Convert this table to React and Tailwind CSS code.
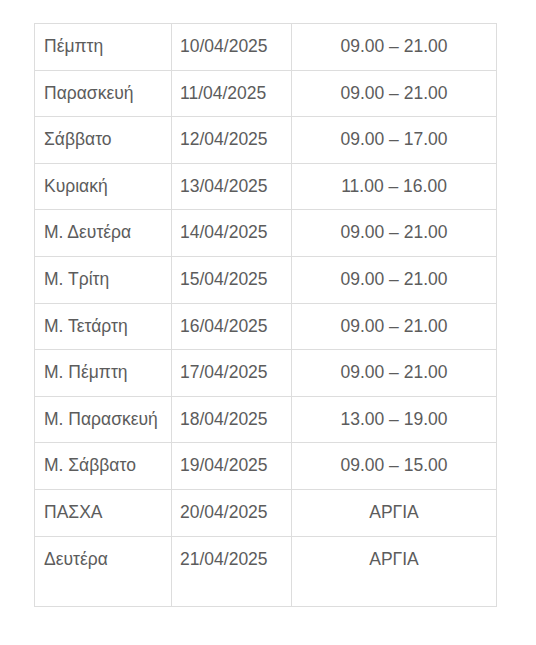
import React from "react";

const rows = [
  ["Πέμπτη", "10/04/2025", "09.00 – 21.00"],
  ["Παρασκευή", "11/04/2025", "09.00 – 21.00"],
  ["Σάββατο", "12/04/2025", "09.00 – 17.00"],
  ["Κυριακή", "13/04/2025", "11.00 – 16.00"],
  ["Μ. Δευτέρα", "14/04/2025", "09.00 – 21.00"],
  ["Μ. Τρίτη", "15/04/2025", "09.00 – 21.00"],
  ["Μ. Τετάρτη", "16/04/2025", "09.00 – 21.00"],
  ["Μ. Πέμπτη", "17/04/2025", "09.00 – 21.00"],
  ["Μ. Παρασκευή", "18/04/2025", "13.00 – 19.00"],
  ["Μ. Σάββατο", "19/04/2025", "09.00 – 15.00"],
  ["ΠΑΣΧΑ", "20/04/2025", "ΑΡΓΙΑ"],
  ["Δευτέρα", "21/04/2025", "ΑΡΓΙΑ"],
];

const App = () => {
  return (
    <div className="min-h-[645px] w-full bg-white pt-[23px] pl-[34px] font-['Liberation_Sans',Arial,sans-serif] text-[17.5px] leading-[24px] text-[#5c5c5c]">
      <table className="w-[463px] table-fixed border-collapse">
        <colgroup>
          <col className="w-[137px]" />
          <col className="w-[120px]" />
          <col />
        </colgroup>
        <tbody>
          {rows.map((row, i) => (
            <tr
              key={row[1]}
              className={i === rows.length - 1 ? "h-[70px]" : "h-[46.6px]"}
            >
              <td className="border border-[#ddd] pl-[9px] pt-[10px] align-top whitespace-nowrap">
                {row[0]}
              </td>
              <td className="border border-[#ddd] pl-[8px] pt-[10px] align-top">
                {row[1]}
              </td>
              <td className="border border-[#ddd] pt-[10px] text-center align-top">
                {row[2]}
              </td>
            </tr>
          ))}
        </tbody>
      </table>
    </div>
  );
};

export default App;
